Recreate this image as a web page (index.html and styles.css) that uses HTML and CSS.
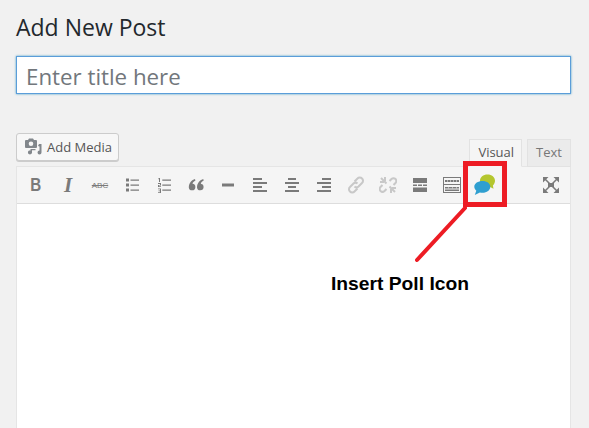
FILE: index.html
```html
<!DOCTYPE html>
<html lang="en">
<head>
    <meta charset="UTF-8">
    <title>Add New Post</title>
    <link rel="stylesheet" href="styles.css">
</head>
<body>
    <h1 class="page-title">Add New Post</h1>
    <input class="title-input" type="text" placeholder="Enter title here">

    <div class="editor-head">
        <button class="media-btn" type="button">
            <svg class="media-icon" width="18" height="18" viewBox="0 0 18 18"><path fill="#82878c" fill-rule="evenodd" d="M2 2h2l1-1.500h4L10 2h2a1 1 0 0 1 1 1v6a1 1 0 0 1-1 1H2a1 1 0 0 1-1-1V3a1 1 0 0 1 1-1zm5 1.500a2.300 2.300 0 1 0 0 4.600 2.300 2.300 0 0 0 0-4.600z"/><path fill="#82878c" d="M15 6h2.500v8.500a2 2 0 1 1-2-2V8.500L14 8zM5 12.500h1.500V11h5v1.300H8V15a2.100 2.100 0 1 1-3-2.500z"/></svg>
            <span>Add Media</span>
        </button>
        <div class="tabs">
            <span class="tab tab-active">Visual</span>
            <span class="tab">Text</span>
        </div>
    </div>

    <div class="editor">
        <div class="toolbar">
            <span class="tool"><b class="glyph-bold">B</b></span>
            <span class="tool"><i class="glyph-italic">I</i></span>
            <span class="tool"><s class="glyph-strike">ABC</s></span>
            <span class="tool"><svg width="16" height="16" viewBox="0 0 16 16"><path fill="#7a7a7a" d="M2 1.500h3v3H2zM2 6.500h3v3H2zM2 11.500h3v3H2zM6.500 2.500H15v1.300H6.500zM6.500 7.500H15v1.300H6.500zM6.500 12.500H15v1.300H6.500z"/></svg></span>
            <span class="tool"><svg width="16" height="16" viewBox="0 0 16 16"><path fill="#7a7a7a" d="M2.500 1h1.500v4H3V2.200h-.5zM2 6h3v2.600H3v.7h2v.8H2V8h2v-1H2zM2 11.500h3V16H2v-.8h2v-1H2.500v-.7H4v-1.200H2zM6.300 2.500H15v1.300H6.300zM6.300 7.500H15v1.300H6.300zM6.300 12.500H15v1.300H6.300z"/></svg></span>
            <span class="tool"><svg width="16" height="16" viewBox="0 0 16 16"><path fill="#7a7a7a" d="M7 2C4 3 .8 5.500.8 10.500a3.300 3.300 0 1 0 3.700-3.700c.3-1.200 1.300-2.300 2.900-3zM15.300 2C12.300 3 9 5.500 9 10.500a3.300 3.300 0 1 0 3.800-3.700c.3-1.200 1.200-2.300 2.800-3z"/></svg></span>
            <span class="tool"><svg width="16" height="16" viewBox="0 0 16 16"><path fill="#7a7a7a" d="M2 6.500h12v3H2z"/></svg></span>
            <span class="tool"><svg width="16" height="16" viewBox="0 0 16 16"><path fill="#7a7a7a" d="M1 1h9v2H1zM1 5h14v2H1zM1 9h9v2H1zM1 13h14v2H1z"/></svg></span>
            <span class="tool"><svg width="16" height="16" viewBox="0 0 16 16"><path fill="#7a7a7a" d="M4 1h8v2H4zM1 5h14v2H1zM4 9h8v2H4zM1 13h14v2H1z"/></svg></span>
            <span class="tool"><svg width="16" height="16" viewBox="0 0 16 16"><path fill="#7a7a7a" d="M6 1h9v2H6zM1 5h14v2H1zM6 9h9v2H6zM1 13h14v2H1z"/></svg></span>
            <span class="tool"><svg width="18" height="18" viewBox="0 0 18 18"><g fill="none" stroke="#c8c8c8" stroke-width="2"><path d="M7.500 5.500 10.500 2.500a3 3 0 0 1 4.500 0 3 3 0 0 1 0 4.500l-3.500 3.500a3 3 0 0 1-4 0"/><path d="M10.500 12.500 7.500 15.500a3 3 0 0 1-4.500 0 3 3 0 0 1 0-4.500l3.500-3.500a3 3 0 0 1 4 0"/></g></svg></span>
            <span class="tool"><svg width="18" height="18" viewBox="0 0 18 18"><g fill="none" stroke="#c8c8c8" stroke-width="2"><path d="M10.500 5 12.500 3a2.800 2.800 0 0 1 4 4L14.500 9"/><path d="M7.500 13 5.500 15a2.800 2.800 0 0 1-4-4L3.500 9"/><path d="M2 2 7.500 7.500M6 1v4M1 6h4M16 16 10.500 10.500M12 17v-4M17 12h-4"/></g></svg></span>
            <span class="tool"><svg width="16" height="16" viewBox="0 0 16 16"><path fill="#7a7a7a" d="M1 1h14v5H1zM1 7.500h4V9H1zM6 7.500h4V9H6zM11 7.500h4V9h-4zM1 10.500h14V15H1z"/></svg></span>
            <span class="tool"><svg width="20" height="16" viewBox="0 0 20 16"><path fill="#7a7a7a" fill-rule="evenodd" d="M1 0h18v16H1zm1 1v6h16V1zm0 7v7h16V8z"/><path fill="#7a7a7a" d="M3 3h14v2H3zM3 10h14v1.500H3zM3 12.500h14V14H3z"/><path fill="#f5f5f5" d="M5.500 3h.5v2h-.5zM8.500 3h.5v2h-.5zM11.500 3h.5v2h-.5zM14.500 3h.5v2h-.5zM6 10h.5v1.500H6zM10 10h.5v1.500H10zM14 10h.5v1.500H14z"/></svg></span>
            <span class="tool"><svg class="poll-icon" width="22" height="22" viewBox="0 0 22 22"><path fill="#b4c62e" d="M13.500 0.500c4.300 0 7.500 2.700 7.500 6.300 0 1.900-.8 3.500-2.100 4.700l.6 3.300-3.400-1.700c-3.500.9-10.100-2-10.100-6.300C6 3.200 9.200.5 13.500.5z"/><path fill="#2f9fd0" d="M8.500 7c4.400 0 7.800 2.400 7.800 5.800s-3.400 6-7.800 6c-.9 0-1.800-.1-2.600-.3L.8 21l1.500-4.300C1 15.600.3 14.300.3 12.800.3 9.400 4.100 7 8.500 7z"/></svg></span>
            <span class="tool tool-last"><svg width="16" height="16" viewBox="0 0 16 16"><path fill="#7a7a7a" d="M0 0h5.500L0 5.500zM16 0v5.500L10.500 0zM0 16v-5.500L5.500 16zM16 16h-5.500L16 10.500zM5 6h6v4H5z"/><path stroke="#7a7a7a" stroke-width="1.500" d="M2 2l4.500 4.500M14 2l-4.500 4.500M2 14l4.500-4.500M14 14l-4.500-4.500"/></svg></span>
        </div>
        <div class="editor-body"></div>
    </div>

    <div class="callout-box"></div>
    <svg class="callout-line" width="589" height="428" viewBox="0 0 589 428"><line x1="465" y1="208" x2="417" y2="260" stroke="#ed1c24" stroke-width="4" stroke-linecap="round"/></svg>
    <div class="callout-text">Insert Poll Icon</div>
</body>
</html>
```

FILE: styles.css
```css
html, body {
    height: 100%;
}
body {
    margin: 0;
    padding: 0 18px 0 16px;
    background: #f1f1f1;
    font-family: "Open Sans", sans-serif;
    color: #23282d;
    overflow: hidden;
    box-sizing: border-box;
}
.page-title {
    margin: 0;
    padding-top: 11px;
    height: 56px;
    box-sizing: border-box;
    font-size: 23px;
    font-weight: 400;
    line-height: 32px;
}
.title-input {
    display: block;
    width: 100%;
    height: 38px;
    box-sizing: border-box;
    padding: 4px 9px 2px;
    border: 1px solid #5b9dd9;
    box-shadow: 0 0 2px rgba(30,140,190,0.8);
    background: #fff;
    font-family: "Open Sans", sans-serif;
    font-size: 22.3px;
    outline: none;
}
.title-input::placeholder {
    color: #72777c;
    opacity: 1;
}
.editor-head {
    display: flex;
    justify-content: space-between;
    align-items: flex-end;
    margin-top: 39px;
    height: 34px;
}
.media-btn {
    display: flex;
    align-items: center;
    gap: 5px;
    align-self: flex-start;
    width: 103px;
    height: 28px;
    padding: 0 7px;
    box-sizing: border-box;
    border: 1px solid #ccc;
    border-radius: 3px;
    background: #f7f7f7;
    box-shadow: 0 1px 0 #ccc;
    color: #555;
    font-family: "Open Sans", sans-serif;
    font-size: 13px;
    white-space: nowrap;
}
.media-icon {
    flex: none;
}
.tabs {
    display: flex;
    gap: 5px;
    height: 28px;
}
.tab {
    height: 28px;
    box-sizing: border-box;
    padding: 0 8px;
    border: 1px solid #e2e2e2;
    background: #ebebeb;
    color: #777;
    font-size: 13px;
    line-height: 25px;
    position: relative;
    z-index: 1;
}
.tab-active {
    padding-right: 7px;
    background: #f5f5f5;
    border-color: #e2e2e2 #e2e2e2 #f5f5f5;
    color: #555;
}
.editor {
    margin-top: -1px;
    border: 1px solid #e5e5e5;
    border-bottom: 0;
    background: #fff;
    height: 262px;
}
.toolbar {
    display: flex;
    align-items: center;
    height: 36px;
    padding: 0 3px;
    background: #f5f5f5;
    border-bottom: 1px solid #ddd;
}
.tool {
    display: flex;
    align-items: center;
    justify-content: center;
    width: 32px;
    height: 32px;
    flex: none;
}
.tool-last {
    margin-left: auto;
}
.poll-icon {
    margin: 0 0 1px 2px;
}
.glyph-bold {
    font-family: "Liberation Sans", sans-serif;
    font-weight: 700;
    font-size: 19px;
    color: #7a7a7a;
    transform: scaleX(0.8);
}
.glyph-italic {
    font-family: "Liberation Serif", serif;
    font-weight: 700;
    font-size: 21px;
    color: #7a7a7a;
}
.glyph-strike {
    font-family: "Liberation Sans", sans-serif;
    font-size: 8px;
    color: #7a7a7a;
}
.callout-box {
    position: absolute;
    z-index: 2;
    left: 463px;
    top: 161px;
    width: 34px;
    height: 36px;
    border: 5px solid #ed1c24;
}
.callout-line {
    position: absolute;
    z-index: 2;
    left: 0;
    top: 0;
    pointer-events: none;
}
.callout-text {
    position: absolute;
    z-index: 2;
    left: 331px;
    top: 273px;
    font-family: "Liberation Sans", sans-serif;
    font-size: 19.25px;
    font-weight: 700;
    line-height: 21px;
    color: #000;
}
```
